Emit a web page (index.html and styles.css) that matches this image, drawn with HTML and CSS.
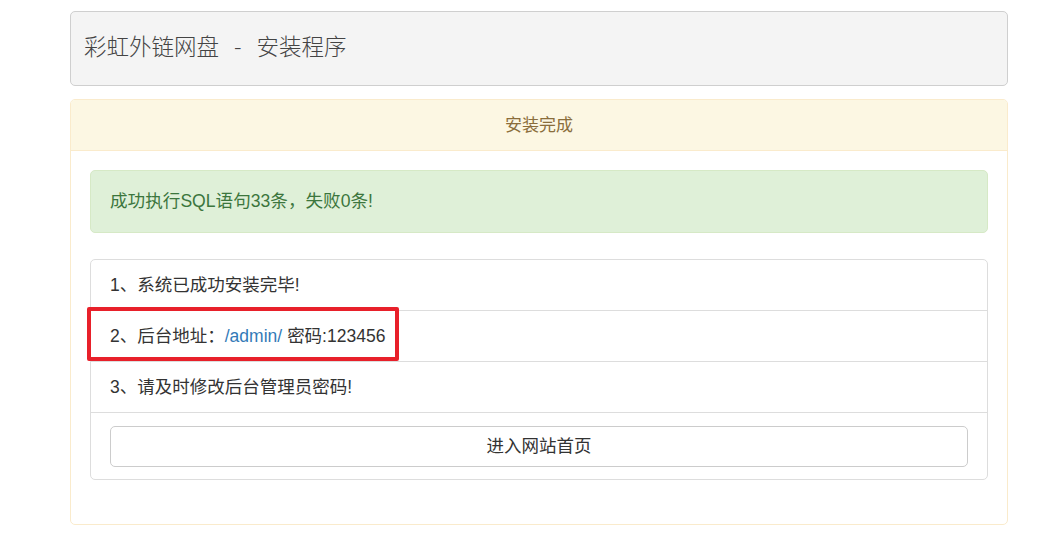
FILE: index.html
```html
<!DOCTYPE html>
<html lang="zh-CN">
<head>
<meta charset="utf-8">
<title>彩虹外链网盘 - 安装程序</title>
<link rel="stylesheet" href="styles.css">
</head>
<body>
<div class="wrap">
  <div class="topbar">
    <h4 class="title">彩虹外链网盘<span class="sep">-</span>安装程序</h4>
  </div>
  <div class="panel">
    <div class="panel-heading">安装完成</div>
    <div class="panel-body">
      <div class="alert">成功执行SQL语句33条，失败0条!</div>
      <ul class="list-group">
        <li class="item">1、系统已成功安装完毕!</li>
        <li class="item item-marked">2、后台地址：<a class="link" href="#">/admin/</a> 密码:123456<span class="mark"></span></li>
        <li class="item">3、请及时修改后台管理员密码!</li>
        <li class="item item-btn"><a class="btn" href="#">进入网站首页</a></li>
      </ul>
    </div>
  </div>
</div>
</body>
</html>
```

FILE: styles.css
```css
* { box-sizing: border-box; }
html, body {
  margin: 0;
  padding: 0;
  background: #fff;
}
body {
  font-family: "Liberation Sans", Arial, "Noto Sans CJK SC", sans-serif;
  font-size: 17.5px;
  line-height: 25px;
  color: #333;
}
.wrap {
  width: 938px;
  margin: 11px 0 0 70px;
}
.topbar {
  height: 75px;
  background: #f4f4f4;
  border: 1px solid #cfcfcf;
  border-radius: 5px;
  display: flex;
  align-items: center;
  padding: 0 13px;
}
.title {
  margin: 0;
  font-size: 22.5px;
  color: #444;
  line-height: 30px;
  padding-bottom: 8px;
  font-family: "Noto Sans CJK SC", "Liberation Sans", sans-serif;
  font-weight: 300;
}
.sep {
  padding: 0 15px;
}
.panel {
  margin-top: 13px;
  border: 1px solid #faebcc;
  border-radius: 5px;
  background: #fff;
}
.panel-heading {
  height: 51px;
  background: #fcf7e3;
  border-bottom: 1px solid #faebcc;
  border-radius: 4px 4px 0 0;
  color: #8a6d3b;
  display: flex;
  align-items: center;
  justify-content: center;
  font-size: 17px;
}
.panel-body {
  padding: 19px 19px 19px 19px;
}
.alert {
  height: 63px;
  background: #dff0d8;
  border: 1px solid #d6e9c6;
  border-radius: 5px;
  color: #3c763d;
  display: flex;
  align-items: center;
  padding: 0 19px;
  font-size: 17.6px;
}
.list-group {
  list-style: none;
  margin: 26px 0 25px;
  padding: 0;
  border: 1px solid #ddd;
  border-radius: 5px;
}
.item {
  position: relative;
  height: 51px;
  display: flex;
  align-items: center;
  padding: 0 19px;
  border-top: 1px solid #ddd;
}
.item:first-child {
  border-top: 0;
  height: 50px;
}
.link {
  color: #337ab7;
  text-decoration: none;
  margin-right: 5px;
}
.mark {
  position: absolute;
  left: -4px;
  top: -4px;
  width: 312px;
  height: 54px;
  border: 4px solid #e8202a;
  border-radius: 2px;
}
.item-btn {
  height: 67px;
  padding: 0 19px;
}
.btn {
  flex: 1;
  height: 41px;
  display: flex;
  align-items: center;
  justify-content: center;
  border: 1px solid #ccc;
  border-radius: 5px;
  color: #333;
  text-decoration: none;
  background: #fff;
}
```
